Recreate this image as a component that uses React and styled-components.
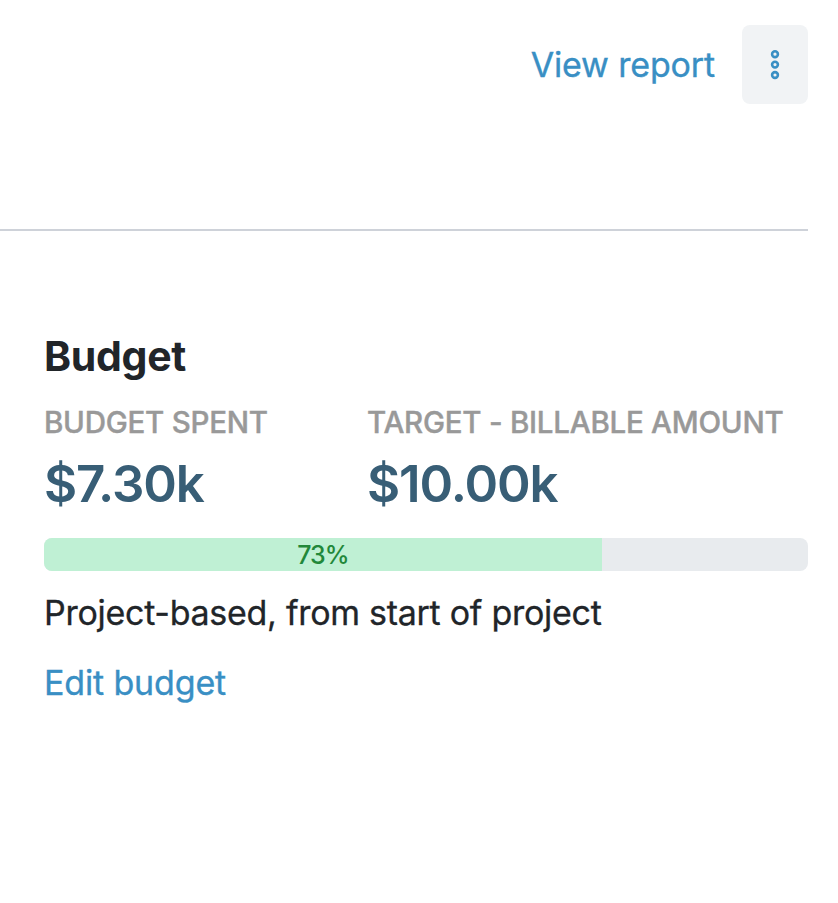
import React from 'react';
import styled, { createGlobalStyle } from 'styled-components';

const GlobalStyle = createGlobalStyle`
  *, *::before, *::after { box-sizing: border-box; }
  body {
    margin: 0;
    background: #fff;
    color: #212529;
    font-family: Inter, "Liberation Sans", sans-serif;
  }
`;

const Page = styled.main`
  width: 838px;
  height: 903px;
  padding-right: 30px;
  overflow: hidden;
`;

const Header = styled.header`
  display: flex;
  justify-content: flex-end;
  align-items: flex-start;
  gap: 27px;
  height: 231px;
  padding-top: 25px;
  border-bottom: 2px solid #ced2d9;
`;

const Link = styled.a`
  color: #398fc4;
  font-size: 34px;
  font-weight: 400;
  -webkit-text-stroke: 0.35px currentColor;
  line-height: 40px;
  letter-spacing: -0.15px;
  text-decoration: none;
  white-space: nowrap;
`;

const ReportLink = styled(Link)`
  line-height: 80px;
`;

const MenuButton = styled.button`
  display: flex;
  align-items: center;
  justify-content: center;
  width: 66px;
  height: 79px;
  padding: 0;
  border: 0;
  border-radius: 8px;
  background: #f1f3f5;
  color: #398fc4;
`;

const BudgetSection = styled.section`
  display: flex;
  flex-direction: column;
  padding: 101px 0 0 44px;
`;

const Title = styled.h2`
  margin: 0;
  font-size: 41px;
  font-weight: 700;
  line-height: 48px;
  letter-spacing: -0.3px;
`;

const Metrics = styled.div`
  display: grid;
  grid-template-columns: 323px 1fr;
  margin-top: 24px;
`;

const Metric = styled.div`
  white-space: nowrap;
`;

const MetricLabel = styled.div`
  color: #999;
  font-size: 29.5px;
  font-weight: 500;
  -webkit-text-stroke: 0.4px currentColor;
  line-height: 37px;
  letter-spacing: -0.25px;
`;

const MetricValue = styled.div`
  margin-top: 13px;
  color: #385e76;
  font-size: 51px;
  font-weight: 600;
  line-height: 60px;
  letter-spacing: -1.1px;
`;

const Track = styled.div`
  height: 33px;
  margin-top: 24px;
  border-radius: 8px;
  overflow: hidden;
  background: #e8ebee;
`;

const Fill = styled.div`
  height: 100%;
  background: #bff0d4;
  color: #22883a;
  font-size: 25px;
  font-weight: 500;
  line-height: 34px;
  letter-spacing: -1.1px;
  text-align: center;
`;

const Description = styled.p`
  margin: 21px 0 30px;
  font-size: 34px;
  font-weight: 400;
  -webkit-text-stroke: 0.3px currentColor;
  line-height: 41px;
  letter-spacing: -0.28px;
  white-space: nowrap;
`;

const percent = 73;

export default function App() {
  return (
    <>
      <GlobalStyle />
      <Page>
        <Header>
          <ReportLink>View report</ReportLink>
          <MenuButton aria-label="More options">
            <svg width="10" height="32" viewBox="0 0 10 32" fill="none" stroke="currentColor" strokeWidth="2.6">
              <circle cx="5" cy="5.2" r="2.9" />
              <circle cx="5" cy="15.6" r="2.9" />
              <circle cx="5" cy="26" r="2.9" />
            </svg>
          </MenuButton>
        </Header>
        <BudgetSection>
          <Title>Budget</Title>
          <Metrics>
            <Metric>
              <MetricLabel>BUDGET SPENT</MetricLabel>
              <MetricValue>$7.30k</MetricValue>
            </Metric>
            <Metric>
              <MetricLabel>TARGET - BILLABLE AMOUNT</MetricLabel>
              <MetricValue>$10.00k</MetricValue>
            </Metric>
          </Metrics>
          <Track>
            <Fill style={{ width: `${percent}%` }}>{percent}%</Fill>
          </Track>
          <Description>Project-based, from start of project</Description>
          <Link>Edit budget</Link>
        </BudgetSection>
      </Page>
    </>
  );
}
